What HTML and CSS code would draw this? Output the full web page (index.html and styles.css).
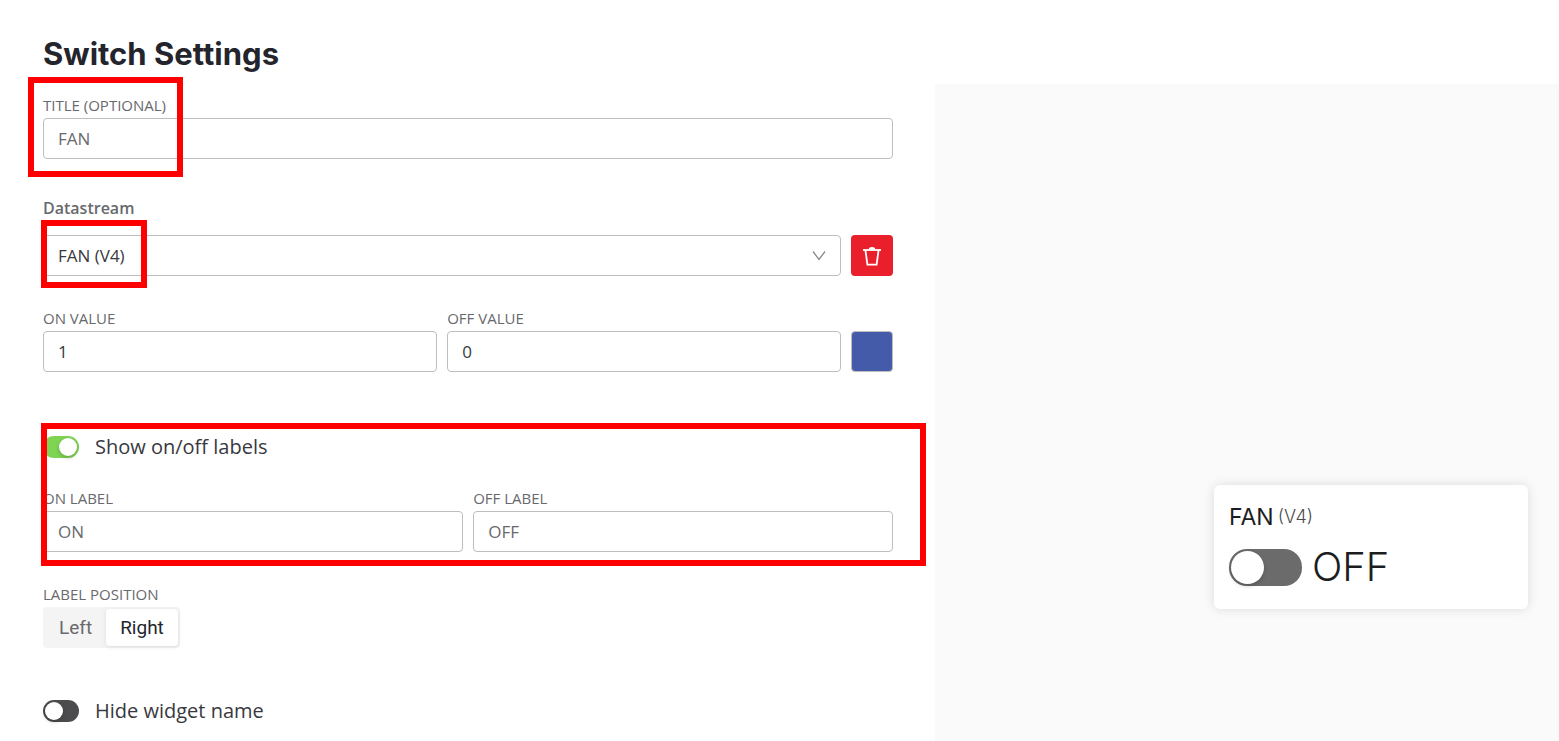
FILE: index.html
```
<!DOCTYPE html>
<html lang="en">
<head>
    <meta charset="UTF-8">
    <meta name="viewport" content="width=device-width, initial-scale=1.0">
    <title>Switch Settings</title>
    <link rel="stylesheet" href="styles.css">
</head>
<body>
    <div class="page">
        <header class="page-header">
            <h1 class="page-title">Switch Settings</h1>
        </header>

        <main class="content">
            <form class="settings">
                <div class="field title-field">
                    <label for="title">TITLE (OPTIONAL)</label>
                    <input class="control muted" type="text" id="title" value="FAN">
                    <div class="highlight highlight-title"></div>
                </div>

                <div class="field datastream-field">
                    <label class="strong" for="datastream">Datastream</label>
                    <div class="row">
                        <div class="select-wrap">
                            <select class="control" id="datastream">
                                <option>FAN (V4)</option>
                            </select>
                            <svg class="chevron" viewBox="0 0 14 10" aria-hidden="true">
                                <path d="M1 0.5 L7 8.5 L13 0.5" fill="none" stroke="currentColor" stroke-width="1.3"/>
                            </svg>
                        </div>
                        <button class="square delete" type="button" aria-label="Delete datastream">
                            <svg viewBox="0 0 20 22" aria-hidden="true">
                                <path d="M1 5 H19" fill="none" stroke="currentColor" stroke-width="1.8"/>
                                <path d="M3.4 5 L5.4 19.6 H14.6 L16.6 5" fill="none" stroke="currentColor" stroke-width="1.8"/>
                                <path d="M6.5 4.5 C7 1.2 13 1.2 13.5 4.5 Z" fill="currentColor"/>
                            </svg>
                        </button>
                    </div>
                    <div class="highlight highlight-datastream"></div>
                </div>

                <div class="row values-row">
                    <div class="field">
                        <label for="onValue">ON VALUE</label>
                        <input class="control" type="text" id="onValue" value="1">
                    </div>
                    <div class="field">
                        <label for="offValue">OFF VALUE</label>
                        <input class="control" type="text" id="offValue" value="0">
                    </div>
                    <button class="square color" type="button" aria-label="Color"></button>
                </div>

                <div class="labels-group">
                    <label class="toggle-row">
                        <input class="toggle" type="checkbox" checked>
                        <span>Show on/off labels</span>
                    </label>
                    <div class="row">
                        <div class="field">
                            <label for="onLabel">ON LABEL</label>
                            <input class="control muted" type="text" id="onLabel" value="ON">
                        </div>
                        <div class="field">
                            <label for="offLabel">OFF LABEL</label>
                            <input class="control muted" type="text" id="offLabel" value="OFF">
                        </div>
                    </div>
                    <div class="highlight highlight-labels"></div>
                </div>

                <fieldset class="position-field">
                    <legend>LABEL POSITION</legend>
                    <div class="segmented">
                        <label><input type="radio" name="position"><span>Left</span></label>
                        <label><input type="radio" name="position" checked><span>Right</span></label>
                    </div>
                </fieldset>

                <label class="toggle-row">
                    <input class="toggle" type="checkbox">
                    <span>Hide widget name</span>
                </label>
            </form>

            <section class="preview">
                <div class="widget">
                    <div class="widget-name">FAN <small>(V4)</small></div>
                    <label class="widget-switch">
                        <input class="toggle toggle-large" type="checkbox">
                        <span>OFF</span>
                    </label>
                </div>
            </section>
        </main>
    </div>
</body>
</html>
```

FILE: styles.css
```
* {
    box-sizing: border-box;
}

body {
    margin: 0;
    background: #fff;
    color: #38393e;
    font-family: 'Open Sans', 'Noto Sans', sans-serif;
    font-size: 16px;
}

.page {
    display: flex;
    flex-direction: column;
    min-height: 100vh;
}

.page-header {
    padding: 34px 43px 10px;
}

.page-title {
    margin: 0;
    color: #24252c;
    font-family: Inter, sans-serif;
    font-size: 31px;
    font-weight: 700;
    line-height: 40px;
}

.content {
    flex: 1;
    display: grid;
    grid-template-columns: 3fr 2fr;
}

.settings {
    padding: 10px 42px 18px 43px;
}

.field {
    flex: 1;
    min-width: 0;
}

.field label,
legend {
    display: block;
    padding: 0 0 2px;
    color: #68696d;
    font-size: 15px;
    line-height: 22px;
}

.field .strong {
    padding-bottom: 15px;
    font-size: 16px;
    font-weight: 600;
    line-height: 23px;
}

.control {
    display: block;
    width: 100%;
    height: 41px;
    padding: 0 14px;
    border: 1px solid #bebebe;
    border-radius: 4px;
    background: #fff;
    color: #38393e;
    font-family: inherit;
    font-size: 17px;
    appearance: none;
}

.control.muted {
    color: #68696d;
}

.row {
    display: flex;
    align-items: flex-end;
    gap: 10px;
}

.title-field {
    position: relative;
    margin-bottom: 38px;
}

.datastream-field {
    position: relative;
    margin-bottom: 31px;
}

.values-row {
    margin-bottom: 63px;
}

.select-wrap {
    position: relative;
    flex: 1;
}

.chevron {
    position: absolute;
    top: 16px;
    right: 15px;
    width: 14px;
    height: 10px;
    color: #888;
    pointer-events: none;
}

.square {
    display: flex;
    align-items: center;
    justify-content: center;
    width: 42px;
    height: 41px;
    padding: 0;
    border: 0;
    border-radius: 4px;
}

.delete {
    background: #e9202b;
    color: #fff;
}

.delete svg {
    width: 20px;
    height: 22px;
}

.color {
    border: 1px solid #bebebe;
    background: #435ba9;
}

.toggle-row {
    display: flex;
    align-items: center;
    gap: 16px;
    font-size: 20px;
    line-height: 24px;
}

.toggle {
    flex: none;
    display: flex;
    width: 36px;
    height: 22px;
    margin: 0;
    padding: 2px;
    border-radius: 18px;
    background: #4c4c4e;
    appearance: none;
}

.toggle::before {
    content: '';
    height: 100%;
    aspect-ratio: 1;
    border-radius: 50%;
    background: #fff;
    box-shadow: 0 2px 4px rgba(0, 0, 0, 0.2);
}

.toggle:checked {
    justify-content: flex-end;
    background: #7fd453;
}

.labels-group {
    position: relative;
    margin-bottom: 31px;
}

.labels-group .toggle-row {
    margin-bottom: 28px;
}

.position-field {
    margin: 0 0 51px;
    padding: 0;
    border: 0;
}

.segmented {
    display: inline-flex;
    height: 41px;
    padding: 2px;
    border-radius: 4px;
    background: #f4f4f4;
    font-family: Roboto, sans-serif;
    font-size: 19px;
    line-height: 37px;
    vertical-align: top;
}

.segmented input {
    position: absolute;
    opacity: 0;
}

.segmented span {
    display: block;
    padding: 0 14px;
    border-radius: 4px;
    color: #68696d;
}

.segmented input:checked + span {
    background: #fff;
    color: #24252c;
    box-shadow: 0 1px 4px rgba(0, 0, 0, 0.1);
}

/* red callout frames over the form */
.highlight {
    position: absolute;
    border: 6px solid #f00;
    pointer-events: none;
}

.highlight-title {
    top: -17px;
    left: -15px;
    width: 155px;
    height: 100px;
}

.highlight-datastream {
    top: 23px;
    left: -2px;
    width: 106px;
    height: 68px;
}

.highlight-labels {
    top: -12px;
    right: -33px;
    bottom: -14px;
    left: -2px;
}

.preview {
    display: flex;
    align-items: flex-end;
    justify-content: flex-end;
    padding: 132px 31px;
    background: #fafafa;
}

.widget {
    width: 314px;
    padding: 18px 15px 20px;
    border-radius: 6px;
    background: #fff;
    box-shadow: 0 0 12px rgba(0, 0, 0, 0.12);
    color: #1c1d20;
    font-family: Inter, sans-serif;
}

.widget-name {
    display: flex;
    gap: 4px;
    margin-bottom: 14px;
    font-size: 23px;
    line-height: 28px;
}

.widget-name small {
    color: #4c4c4e;
    font-size: 18px;
    font-weight: 300;
}

.widget-switch {
    display: flex;
    align-items: center;
    gap: 10px;
    font-size: 40px;
    font-weight: 300;
    line-height: 44px;
}

.toggle-large {
    width: 73px;
    height: 37px;
    background: #6b6b6b;
}
```
